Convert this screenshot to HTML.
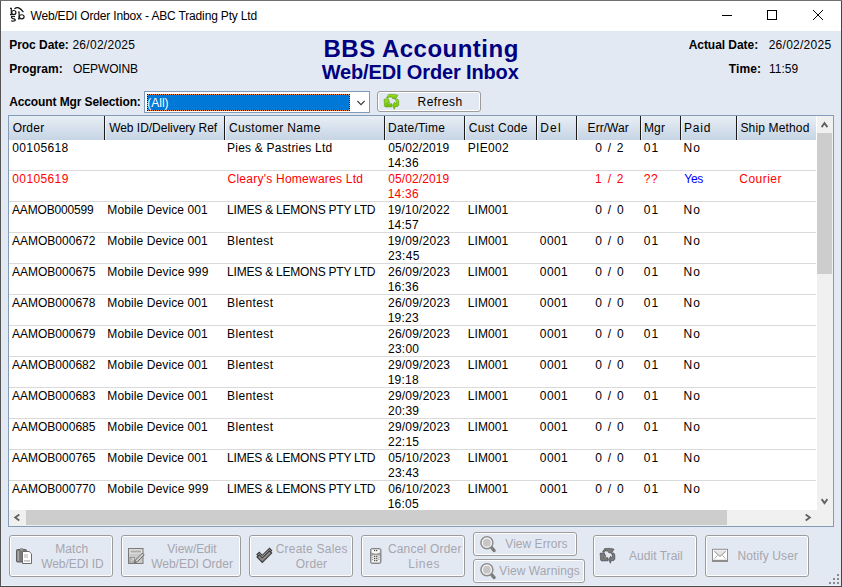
<!DOCTYPE html>
<html><head><meta charset="utf-8"><style>
html,body{margin:0;padding:0;width:842px;height:587px;overflow:hidden;background:#737373}
body{position:relative;font-family:'Liberation Sans',sans-serif;}
.t{position:absolute;white-space:nowrap;font-size:12px;line-height:12px;color:#000;font-family:'Liberation Sans',sans-serif;}
</style></head><body>
<div style="position:absolute;left:0px;top:0px;width:842px;height:587px;background:#555555"></div><div style="position:absolute;left:0px;top:0px;width:842px;height:1px;background:#707070"></div><div style="position:absolute;left:0px;top:586px;width:842px;height:1px;background:#4A4A4A"></div><div style="position:absolute;left:841px;top:1px;width:1px;height:585px;background:#404650"></div><div style="position:absolute;left:1px;top:1px;width:840px;height:30px;background:#FFFFFF"></div><div style="position:absolute;left:1px;top:31px;width:840px;height:555px;background:#E3E9F3"></div><div style="position:absolute;left:1px;top:585px;width:840px;height:1px;background:#EBF1FA"></div><svg style="position:absolute;left:0;top:0" width="842" height="31">
<g fill="#000" shape-rendering="crispEdges"><rect x="722" y="15" width="10" height="1"/><rect x="767" y="10" width="10" height="1"/><rect x="767" y="19" width="10" height="1"/><rect x="767" y="10" width="1" height="10"/><rect x="776" y="10" width="1" height="10"/><rect x="813" y="10" width="1" height="1"/><rect x="822" y="10" width="1" height="1"/><rect x="814" y="11" width="1" height="1"/><rect x="821" y="11" width="1" height="1"/><rect x="815" y="12" width="1" height="1"/><rect x="820" y="12" width="1" height="1"/><rect x="816" y="13" width="1" height="1"/><rect x="819" y="13" width="1" height="1"/><rect x="817" y="14" width="1" height="1"/><rect x="818" y="14" width="1" height="1"/><rect x="818" y="15" width="1" height="1"/><rect x="817" y="15" width="1" height="1"/><rect x="819" y="16" width="1" height="1"/><rect x="816" y="16" width="1" height="1"/><rect x="820" y="17" width="1" height="1"/><rect x="815" y="17" width="1" height="1"/><rect x="821" y="18" width="1" height="1"/><rect x="814" y="18" width="1" height="1"/><rect x="822" y="19" width="1" height="1"/><rect x="813" y="19" width="1" height="1"/></g>
<g fill="none" stroke="#111" stroke-width="1.15">
<path d="M10 8.4 H11.8 M11.3 8 V14.6 M10 14.6 H12"/>
<ellipse cx="13.8" cy="12.5" rx="2.1" ry="2.0"/>
<path d="M18 12 H19.6 M19.1 11.6 V18.8 M18 18.8 H19.6"/>
<ellipse cx="21.7" cy="16.8" rx="2.4" ry="2.0"/>
<path d="M14.4 8.9 Q18.5 5.2 23.4 12.2"/>
</g>
<g fill="none" stroke="#111" stroke-width="1.2">
<path d="M15 16.6 Q13 15.9 11.6 16.6 Q11 18.2 13.1 18.6 Q15.5 19 15.2 20.4 Q13.5 21.6 11 20.8"/>
</g>
</svg><div class="t" style="left:30.45px;top:10px;letter-spacing:-0.161px;">Web/EDI Order Inbox - ABC Trading Pty Ltd</div><div class="t" style="left:9.20px;top:39px;font-weight:bold;letter-spacing:-0.040px;">Proc Date:</div><div class="t" style="left:72.40px;top:39px;letter-spacing:0.283px;">26/02/2025</div><div class="t" style="left:9.20px;top:63px;font-weight:bold;letter-spacing:0.016px;">Program:</div><div class="t" style="left:72.93px;top:63px;letter-spacing:-0.115px;">OEPWOINB</div><div class="t" style="left:688.70px;top:39px;font-weight:bold;letter-spacing:-0.051px;">Actual Date:</div><div class="t" style="left:768.70px;top:39px;letter-spacing:0.261px;">26/02/2025</div><div class="t" style="left:728.87px;top:63px;font-weight:bold;letter-spacing:0.071px;">Time:</div><div class="t" style="left:769.09px;top:63px;letter-spacing:-0.037px;">11:59</div><div class="t" style="left:323.49px;top:37px;font-size:24px;line-height:24px;font-weight:bold;color:#000080;letter-spacing:0.491px;">BBS Accounting</div><div class="t" style="left:321.68px;top:62px;font-size:20px;line-height:20px;font-weight:bold;color:#000080;letter-spacing:-0.142px;">Web/EDI Order Inbox</div><div class="t" style="left:9.20px;top:96px;font-weight:bold;letter-spacing:-0.112px;">Account Mgr Selection:</div><div style="position:absolute;left:144px;top:91px;width:226px;height:22px;background:#FFFFFF;box-sizing:border-box;border:1px solid #7F9BB8"></div><div style="position:absolute;left:147px;top:94px;width:203px;height:17px;background:#0078D7;box-sizing:border-box;border:1px solid #FF8A28"></div><div style="position:absolute;left:147px;top:94px;width:203px;height:17px;box-sizing:border-box;border:1px dotted #101010"></div><div class="t" style="left:147.26px;top:97px;color:#FFFFFF;">(All)</div><svg style="position:absolute;left:355px;top:98px" width="12" height="10"><polyline points="2.4,3 6,6.6 9.6,3" fill="none" stroke="#3A3A3A" stroke-width="1.1"/></svg><div style="position:absolute;left:377px;top:91px;width:104px;height:21px;box-sizing:border-box;border:1px solid #9C9C9C;border-radius:3px;box-shadow:inset 0 0 0 1px #fff"></div><div class="t" style="left:417.62px;top:96px;letter-spacing:0.424px;">Refresh</div><svg style="position:absolute;left:0;top:0" width="842" height="120">
<defs><linearGradient id="gg" x1="0" y1="0" x2="0" y2="1"><stop offset="0" stop-color="#A8E020"/><stop offset="1" stop-color="#6CC000"/></linearGradient></defs>
<g fill="url(#gg)" stroke="#4F9A08" stroke-width="0.6" stroke-linejoin="round">
<polygon points="386.45,97.91 388.60,94.53 394.58,94.38 397.95,95.30 395.50,98.83 392.58,98.67 392.28,97.60 391.20,96.99 389.21,96.99 388.13,98.06"/>
<polygon points="383.99,99.29 388.13,98.83 389.67,102.51 388.13,102.20 387.21,103.74 391.82,103.74 391.97,106.80 385.37,106.96 384.45,105.88 384.30,102.20"/>
<polygon points="395.04,99.29 397.64,98.98 398.72,100.98 398.72,105.27 397.64,106.50 395.34,106.50 394.27,109.26 392.58,105.27 393.81,103.58 394.42,102.20 395.19,103.58 396.26,103.43 396.26,100.98"/>
</g></svg>
<div style="position:absolute;left:8px;top:115px;width:826px;height:412px;background:#FFFFFF;box-sizing:border-box;border:1px solid #839DB8"></div><div style="position:absolute;left:9px;top:116px;width:807px;height:24px;background:linear-gradient(#E8EEF5,#C6D4E4)"></div><div style="position:absolute;left:104px;top:116px;width:1px;height:24px;background:#1A1A1A"></div><div style="position:absolute;left:105px;top:116px;width:1px;height:24px;background:rgba(255,255,255,0.6)"></div><div style="position:absolute;left:224px;top:116px;width:1px;height:24px;background:#1A1A1A"></div><div style="position:absolute;left:225px;top:116px;width:1px;height:24px;background:rgba(255,255,255,0.6)"></div><div style="position:absolute;left:384px;top:116px;width:1px;height:24px;background:#1A1A1A"></div><div style="position:absolute;left:385px;top:116px;width:1px;height:24px;background:rgba(255,255,255,0.6)"></div><div style="position:absolute;left:464px;top:116px;width:1px;height:24px;background:#1A1A1A"></div><div style="position:absolute;left:465px;top:116px;width:1px;height:24px;background:rgba(255,255,255,0.6)"></div><div style="position:absolute;left:536px;top:116px;width:1px;height:24px;background:#1A1A1A"></div><div style="position:absolute;left:537px;top:116px;width:1px;height:24px;background:rgba(255,255,255,0.6)"></div><div style="position:absolute;left:576px;top:116px;width:1px;height:24px;background:#1A1A1A"></div><div style="position:absolute;left:577px;top:116px;width:1px;height:24px;background:rgba(255,255,255,0.6)"></div><div style="position:absolute;left:640px;top:116px;width:1px;height:24px;background:#1A1A1A"></div><div style="position:absolute;left:641px;top:116px;width:1px;height:24px;background:rgba(255,255,255,0.6)"></div><div style="position:absolute;left:680px;top:116px;width:1px;height:24px;background:#1A1A1A"></div><div style="position:absolute;left:681px;top:116px;width:1px;height:24px;background:rgba(255,255,255,0.6)"></div><div style="position:absolute;left:736px;top:116px;width:1px;height:24px;background:#1A1A1A"></div><div style="position:absolute;left:737px;top:116px;width:1px;height:24px;background:rgba(255,255,255,0.6)"></div><div class="t" style="left:12.63px;top:122px;letter-spacing:0.207px;">Order</div><div class="t" style="left:109.15px;top:122px;letter-spacing:-0.025px;">Web ID/Delivery Ref</div><div class="t" style="left:228.89px;top:122px;letter-spacing:0.340px;">Customer Name</div><div class="t" style="left:388.12px;top:122px;letter-spacing:0.234px;">Date/Time</div><div class="t" style="left:468.79px;top:122px;letter-spacing:0.243px;">Cust Code</div><div class="t" style="left:540.22px;top:122px;letter-spacing:1.191px;">Del</div><div class="t" style="left:587.62px;top:122px;letter-spacing:0.043px;">Err/War</div><div class="t" style="left:644.02px;top:122px;letter-spacing:0.109px;">Mgr</div><div class="t" style="left:683.92px;top:122px;letter-spacing:0.847px;">Paid</div><div class="t" style="left:740.46px;top:122px;letter-spacing:0.154px;">Ship Method</div><div style="position:absolute;left:0;top:140px;width:816px;height:370px;overflow:hidden"><div class="t" style="left:12.33px;top:2px;letter-spacing:0.343px;">00105618</div><div class="t" style="left:227.12px;top:2px;letter-spacing:0.204px;">Pies &amp; Pastries Ltd</div><div class="t" style="left:388.13px;top:2px;letter-spacing:0.120px;">05/02/2019</div><div class="t" style="left:387.69px;top:17px;letter-spacing:0.243px;">14:36</div><div class="t" style="left:467.82px;top:2px;letter-spacing:0.285px;">PIE002</div><div class="t" style="left:595.33px;top:2px;">0</div><div class="t" style="left:607.70px;top:2px;">/</div><div class="t" style="left:616.80px;top:2px;">2</div><div class="t" style="left:643.73px;top:2px;letter-spacing:1.107px;">01</div><div class="t" style="left:683.62px;top:2px;letter-spacing:0.948px;">No</div><div style="position:absolute;left:9px;top:30px;width:807px;height:1px;background:#DADADA"></div><div class="t" style="left:12.33px;top:33px;color:#FF0000;letter-spacing:0.373px;">00105619</div><div class="t" style="left:227.49px;top:33px;color:#FF0000;letter-spacing:0.245px;">Cleary&#x27;s Homewares Ltd</div><div class="t" style="left:388.13px;top:33px;color:#FF0000;letter-spacing:0.120px;">05/02/2019</div><div class="t" style="left:387.69px;top:48px;color:#FF0000;letter-spacing:0.243px;">14:36</div><div class="t" style="left:594.89px;top:33px;color:#FF0000;">1</div><div class="t" style="left:607.70px;top:33px;color:#FF0000;">/</div><div class="t" style="left:616.80px;top:33px;color:#FF0000;">2</div><div class="t" style="left:643.71px;top:33px;color:#FF0000;letter-spacing:0.652px;">??</div><div class="t" style="left:684.34px;top:33px;color:#0000FF;letter-spacing:-0.340px;">Yes</div><div class="t" style="left:739.29px;top:33px;color:#FF0000;letter-spacing:0.460px;">Courier</div><div style="position:absolute;left:9px;top:61px;width:807px;height:1px;background:#DADADA"></div><div class="t" style="left:11.98px;top:64px;letter-spacing:-0.169px;">AAMOB000599</div><div class="t" style="left:107.32px;top:64px;letter-spacing:0.109px;">Mobile Device 001</div><div class="t" style="left:227.12px;top:64px;letter-spacing:-0.218px;">LIMES &amp; LEMONS PTY LTD</div><div class="t" style="left:387.69px;top:64px;letter-spacing:0.216px;">19/10/2022</div><div class="t" style="left:387.69px;top:79px;letter-spacing:0.243px;">14:57</div><div class="t" style="left:467.82px;top:64px;letter-spacing:0.089px;">LIM001</div><div class="t" style="left:595.33px;top:64px;">0</div><div class="t" style="left:607.70px;top:64px;">/</div><div class="t" style="left:616.93px;top:64px;">0</div><div class="t" style="left:643.73px;top:64px;letter-spacing:1.107px;">01</div><div class="t" style="left:683.62px;top:64px;letter-spacing:0.948px;">No</div><div style="position:absolute;left:9px;top:92px;width:807px;height:1px;background:#DADADA"></div><div class="t" style="left:11.98px;top:95px;letter-spacing:0.012px;">AAMOB000672</div><div class="t" style="left:107.32px;top:95px;letter-spacing:0.109px;">Mobile Device 001</div><div class="t" style="left:227.12px;top:95px;letter-spacing:0.373px;">Blentest</div><div class="t" style="left:387.69px;top:95px;letter-spacing:0.254px;">19/09/2023</div><div class="t" style="left:388.00px;top:110px;letter-spacing:0.345px;">23:45</div><div class="t" style="left:467.82px;top:95px;letter-spacing:0.089px;">LIM001</div><div class="t" style="left:539.83px;top:95px;letter-spacing:0.386px;">0001</div><div class="t" style="left:595.33px;top:95px;">0</div><div class="t" style="left:607.70px;top:95px;">/</div><div class="t" style="left:616.93px;top:95px;">0</div><div class="t" style="left:643.73px;top:95px;letter-spacing:1.107px;">01</div><div class="t" style="left:683.62px;top:95px;letter-spacing:0.948px;">No</div><div style="position:absolute;left:9px;top:123px;width:807px;height:1px;background:#DADADA"></div><div class="t" style="left:11.98px;top:126px;letter-spacing:0.012px;">AAMOB000675</div><div class="t" style="left:107.32px;top:126px;letter-spacing:0.143px;">Mobile Device 999</div><div class="t" style="left:227.12px;top:126px;letter-spacing:-0.218px;">LIMES &amp; LEMONS PTY LTD</div><div class="t" style="left:388.00px;top:126px;letter-spacing:0.216px;">26/09/2023</div><div class="t" style="left:387.69px;top:141px;letter-spacing:0.243px;">16:36</div><div class="t" style="left:467.82px;top:126px;letter-spacing:0.089px;">LIM001</div><div class="t" style="left:539.83px;top:126px;letter-spacing:0.386px;">0001</div><div class="t" style="left:595.33px;top:126px;">0</div><div class="t" style="left:607.70px;top:126px;">/</div><div class="t" style="left:616.93px;top:126px;">0</div><div class="t" style="left:643.73px;top:126px;letter-spacing:1.107px;">01</div><div class="t" style="left:683.62px;top:126px;letter-spacing:0.948px;">No</div><div style="position:absolute;left:9px;top:154px;width:807px;height:1px;background:#DADADA"></div><div class="t" style="left:11.98px;top:157px;letter-spacing:0.012px;">AAMOB000678</div><div class="t" style="left:107.32px;top:157px;letter-spacing:0.109px;">Mobile Device 001</div><div class="t" style="left:227.12px;top:157px;letter-spacing:0.373px;">Blentest</div><div class="t" style="left:388.00px;top:157px;letter-spacing:0.216px;">26/09/2023</div><div class="t" style="left:387.69px;top:172px;letter-spacing:0.243px;">19:23</div><div class="t" style="left:467.82px;top:157px;letter-spacing:0.089px;">LIM001</div><div class="t" style="left:539.83px;top:157px;letter-spacing:0.386px;">0001</div><div class="t" style="left:595.33px;top:157px;">0</div><div class="t" style="left:607.70px;top:157px;">/</div><div class="t" style="left:616.93px;top:157px;">0</div><div class="t" style="left:643.73px;top:157px;letter-spacing:1.107px;">01</div><div class="t" style="left:683.62px;top:157px;letter-spacing:0.948px;">No</div><div style="position:absolute;left:9px;top:185px;width:807px;height:1px;background:#DADADA"></div><div class="t" style="left:11.98px;top:188px;letter-spacing:0.012px;">AAMOB000679</div><div class="t" style="left:107.32px;top:188px;letter-spacing:0.109px;">Mobile Device 001</div><div class="t" style="left:227.12px;top:188px;letter-spacing:0.373px;">Blentest</div><div class="t" style="left:388.00px;top:188px;letter-spacing:0.216px;">26/09/2023</div><div class="t" style="left:388.00px;top:203px;letter-spacing:0.243px;">23:00</div><div class="t" style="left:467.82px;top:188px;letter-spacing:0.089px;">LIM001</div><div class="t" style="left:539.83px;top:188px;letter-spacing:0.386px;">0001</div><div class="t" style="left:595.33px;top:188px;">0</div><div class="t" style="left:607.70px;top:188px;">/</div><div class="t" style="left:616.93px;top:188px;">0</div><div class="t" style="left:643.73px;top:188px;letter-spacing:1.107px;">01</div><div class="t" style="left:683.62px;top:188px;letter-spacing:0.948px;">No</div><div style="position:absolute;left:9px;top:216px;width:807px;height:1px;background:#DADADA"></div><div class="t" style="left:11.98px;top:219px;letter-spacing:0.012px;">AAMOB000682</div><div class="t" style="left:107.32px;top:219px;letter-spacing:0.109px;">Mobile Device 001</div><div class="t" style="left:227.12px;top:219px;letter-spacing:0.373px;">Blentest</div><div class="t" style="left:388.00px;top:219px;letter-spacing:0.216px;">29/09/2023</div><div class="t" style="left:387.69px;top:234px;letter-spacing:0.243px;">19:18</div><div class="t" style="left:467.82px;top:219px;letter-spacing:0.089px;">LIM001</div><div class="t" style="left:539.83px;top:219px;letter-spacing:0.386px;">0001</div><div class="t" style="left:595.33px;top:219px;">0</div><div class="t" style="left:607.70px;top:219px;">/</div><div class="t" style="left:616.93px;top:219px;">0</div><div class="t" style="left:643.73px;top:219px;letter-spacing:1.107px;">01</div><div class="t" style="left:683.62px;top:219px;letter-spacing:0.948px;">No</div><div style="position:absolute;left:9px;top:247px;width:807px;height:1px;background:#DADADA"></div><div class="t" style="left:11.98px;top:250px;letter-spacing:0.012px;">AAMOB000683</div><div class="t" style="left:107.32px;top:250px;letter-spacing:0.109px;">Mobile Device 001</div><div class="t" style="left:227.12px;top:250px;letter-spacing:0.373px;">Blentest</div><div class="t" style="left:388.00px;top:250px;letter-spacing:0.216px;">29/09/2023</div><div class="t" style="left:388.00px;top:265px;letter-spacing:0.243px;">20:39</div><div class="t" style="left:467.82px;top:250px;letter-spacing:0.089px;">LIM001</div><div class="t" style="left:539.83px;top:250px;letter-spacing:0.386px;">0001</div><div class="t" style="left:595.33px;top:250px;">0</div><div class="t" style="left:607.70px;top:250px;">/</div><div class="t" style="left:616.93px;top:250px;">0</div><div class="t" style="left:643.73px;top:250px;letter-spacing:1.107px;">01</div><div class="t" style="left:683.62px;top:250px;letter-spacing:0.948px;">No</div><div style="position:absolute;left:9px;top:278px;width:807px;height:1px;background:#DADADA"></div><div class="t" style="left:11.98px;top:281px;letter-spacing:0.012px;">AAMOB000685</div><div class="t" style="left:107.32px;top:281px;letter-spacing:0.109px;">Mobile Device 001</div><div class="t" style="left:227.12px;top:281px;letter-spacing:0.373px;">Blentest</div><div class="t" style="left:388.00px;top:281px;letter-spacing:0.216px;">29/09/2023</div><div class="t" style="left:388.00px;top:296px;letter-spacing:0.243px;">22:15</div><div class="t" style="left:467.82px;top:281px;letter-spacing:0.089px;">LIM001</div><div class="t" style="left:539.83px;top:281px;letter-spacing:0.386px;">0001</div><div class="t" style="left:595.33px;top:281px;">0</div><div class="t" style="left:607.70px;top:281px;">/</div><div class="t" style="left:616.93px;top:281px;">0</div><div class="t" style="left:643.73px;top:281px;letter-spacing:1.107px;">01</div><div class="t" style="left:683.62px;top:281px;letter-spacing:0.948px;">No</div><div style="position:absolute;left:9px;top:309px;width:807px;height:1px;background:#DADADA"></div><div class="t" style="left:11.98px;top:312px;letter-spacing:0.012px;">AAMOB000765</div><div class="t" style="left:107.32px;top:312px;letter-spacing:0.109px;">Mobile Device 001</div><div class="t" style="left:227.12px;top:312px;letter-spacing:-0.218px;">LIMES &amp; LEMONS PTY LTD</div><div class="t" style="left:388.13px;top:312px;letter-spacing:0.216px;">05/10/2023</div><div class="t" style="left:388.00px;top:327px;letter-spacing:0.243px;">23:43</div><div class="t" style="left:467.82px;top:312px;letter-spacing:0.089px;">LIM001</div><div class="t" style="left:539.83px;top:312px;letter-spacing:0.386px;">0001</div><div class="t" style="left:595.33px;top:312px;">0</div><div class="t" style="left:607.70px;top:312px;">/</div><div class="t" style="left:616.93px;top:312px;">0</div><div class="t" style="left:643.73px;top:312px;letter-spacing:1.107px;">01</div><div class="t" style="left:683.62px;top:312px;letter-spacing:0.948px;">No</div><div style="position:absolute;left:9px;top:340px;width:807px;height:1px;background:#DADADA"></div><div class="t" style="left:11.98px;top:343px;letter-spacing:0.012px;">AAMOB000770</div><div class="t" style="left:107.32px;top:343px;letter-spacing:0.143px;">Mobile Device 999</div><div class="t" style="left:227.12px;top:343px;letter-spacing:-0.218px;">LIMES &amp; LEMONS PTY LTD</div><div class="t" style="left:388.13px;top:343px;letter-spacing:0.216px;">06/10/2023</div><div class="t" style="left:387.69px;top:358px;letter-spacing:0.243px;">16:05</div><div class="t" style="left:467.82px;top:343px;letter-spacing:0.089px;">LIM001</div><div class="t" style="left:539.83px;top:343px;letter-spacing:0.386px;">0001</div><div class="t" style="left:595.33px;top:343px;">0</div><div class="t" style="left:607.70px;top:343px;">/</div><div class="t" style="left:616.93px;top:343px;">0</div><div class="t" style="left:643.73px;top:343px;letter-spacing:1.107px;">01</div><div class="t" style="left:683.62px;top:343px;letter-spacing:0.948px;">No</div><div style="position:absolute;left:9px;top:371px;width:807px;height:1px;background:#DADADA"></div></div><div style="position:absolute;left:817px;top:116px;width:16px;height:394px;background:#F0F0F0"></div><div style="position:absolute;left:817px;top:133px;width:15px;height:141px;background:#CDCDCD"></div><svg style="position:absolute;left:816px;top:116px" width="17" height="394"><polyline points="5.6,11.1 8.5,7.1 11.4,11.1" fill="none" stroke="#606060" stroke-width="1.8"/><polyline points="5.6,383.1 8.5,387.1 11.4,383.1" fill="none" stroke="#606060" stroke-width="1.8"/></svg><div style="position:absolute;left:9px;top:510px;width:824px;height:16px;background:#F0F0F0"></div><div style="position:absolute;left:26px;top:510px;width:701px;height:15px;background:#CDCDCD"></div><svg style="position:absolute;left:9px;top:510px" width="808" height="16"><polyline points="10.3,4.6 6.2,7.5 10.3,10.4" fill="none" stroke="#606060" stroke-width="1.8"/><polyline points="796.7,4.6 800.8,7.5 796.7,10.4" fill="none" stroke="#606060" stroke-width="1.8"/></svg><div style="position:absolute;left:9px;top:535px;width:104px;height:42px;box-sizing:border-box;border:1px solid #9C9C9C;border-radius:3px;box-shadow:inset 0 0 0 1px #fff"></div><div class="t" style="left:55.32px;top:543px;color:#A6A6AE;letter-spacing:0.046px;">Match</div><div class="t" style="left:41.25px;top:558px;color:#A6A6AE;letter-spacing:-0.080px;">Web/EDI ID</div><div style="position:absolute;left:121px;top:535px;width:120px;height:42px;box-sizing:border-box;border:1px solid #9C9C9C;border-radius:3px;box-shadow:inset 0 0 0 1px #fff"></div><div class="t" style="left:167.35px;top:543px;color:#A6A6AE;letter-spacing:-0.060px;">View/Edit</div><div class="t" style="left:151.15px;top:558px;color:#A6A6AE;">Web/EDI Order</div><div style="position:absolute;left:249px;top:535px;width:104px;height:42px;box-sizing:border-box;border:1px solid #9C9C9C;border-radius:3px;box-shadow:inset 0 0 0 1px #fff"></div><div class="t" style="left:275.69px;top:543px;color:#A6A6AE;letter-spacing:0.216px;">Create Sales</div><div class="t" style="left:295.73px;top:558px;color:#A6A6AE;letter-spacing:0.173px;">Order</div><div style="position:absolute;left:361px;top:535px;width:104px;height:42px;box-sizing:border-box;border:1px solid #9C9C9C;border-radius:3px;box-shadow:inset 0 0 0 1px #fff"></div><div class="t" style="left:387.89px;top:543px;color:#A6A6AE;letter-spacing:0.195px;">Cancel Order</div><div class="t" style="left:408.22px;top:558px;color:#A6A6AE;letter-spacing:0.658px;">Lines</div><div style="position:absolute;left:473px;top:532px;width:104px;height:24px;box-sizing:border-box;border:1px solid #9C9C9C;border-radius:3px;box-shadow:inset 0 0 0 1px #fff"></div><div class="t" style="left:505.35px;top:538px;color:#A6A6AE;letter-spacing:0.028px;">View Errors</div><div style="position:absolute;left:473px;top:559px;width:112px;height:24px;box-sizing:border-box;border:1px solid #9C9C9C;border-radius:3px;box-shadow:inset 0 0 0 1px #fff"></div><div class="t" style="left:499.25px;top:565px;color:#A6A6AE;letter-spacing:0.097px;">View Warnings</div><div style="position:absolute;left:593px;top:535px;width:104px;height:42px;box-sizing:border-box;border:1px solid #9C9C9C;border-radius:3px;box-shadow:inset 0 0 0 1px #fff"></div><div class="t" style="left:628.98px;top:550px;color:#A6A6AE;letter-spacing:0.041px;">Audit Trail</div><div style="position:absolute;left:705px;top:535px;width:104px;height:42px;box-sizing:border-box;border:1px solid #9C9C9C;border-radius:3px;box-shadow:inset 0 0 0 1px #fff"></div><div class="t" style="left:737.42px;top:550px;color:#A6A6AE;letter-spacing:0.124px;">Notify User</div><svg style="position:absolute;left:0;top:0" width="842" height="587">
<!-- clipboard + doc -->
<rect x="16.5" y="549.5" width="10" height="12.5" rx="1" fill="#7A7A7A" stroke="#5E5E5E"/>
<rect x="17.6" y="551" width="1.2" height="10" fill="#B8B8B8"/>
<rect x="20" y="548" width="3.2" height="2.4" fill="#9A9A9A"/>
<path d="M22.5 551.5 H29.2 L31.5 553.8 V563.5 H22.5 Z" fill="#FFFFFF" stroke="#6A6A6A"/>
<rect x="24" y="554" width="4" height="4" fill="#D8D8D8"/>
<rect x="24" y="560" width="6" height="1.8" fill="#C8C8C8"/>
<!-- form + pencil -->
<rect x="128.5" y="548.5" width="14.5" height="15" fill="#C9C9C9" stroke="#7A7A7A"/>
<rect x="130" y="550" width="11.5" height="3" fill="#ABABAB" stroke="#F2F2F2" stroke-width="0.8"/>
<rect x="130" y="557.5" width="4.5" height="4.5" fill="#D8D8D8" stroke="#8A8A8A" stroke-width="0.8"/><path d="M130.5 558 L134 561.5" stroke="#8A8A8A" stroke-width="0.8"/>
<path d="M134.6 562.8 L135.5 560.0 L142.4 553.1 L144.2 554.9 L137.3 561.8 Z" fill="#D0D0D0" stroke="#505050" stroke-width="0.8"/>
<!-- checkmark -->
<path d="M257 554.5 L259.3 552.3 L262.3 555.3 L269.5 548.3 L271.7 550.6 L262.3 560 Z" fill="#AFAFAF" stroke="#3A3A3A" stroke-width="1.1"/>
<path d="M257 557 L259.3 554.8 L262.3 557.8 L269.5 550.8 L271.7 553.1 L262.3 562.5 Z" fill="#8A8A8A" stroke="#3A3A3A" stroke-width="1.1"/>
<!-- calculator -->
<rect x="370.5" y="548.5" width="10.5" height="15" rx="1.8" fill="#A0A0A0" stroke="#858585"/>
<path d="M371.6 549.6 H379.9 V552.6 Q375.75 554.6 371.6 552.6 Z" fill="#FAFAFA"/>
<path d="M371.6 556 Q375.75 553.8 379.9 556 V562.4 H371.6 Z" fill="#F0F0F0"/>
<g fill="#505050">
<rect x="374" y="550" width="1.2" height="1.2"/><rect x="376" y="550" width="1.2" height="1.2"/>
<rect x="374" y="555.7" width="1.3" height="1.3"/><rect x="376.1" y="555.7" width="1.3" height="1.3"/>
<rect x="374" y="557.8" width="1.3" height="1.3"/><rect x="376.1" y="557.8" width="1.3" height="1.3"/>
<rect x="374" y="559.9" width="1.3" height="1.3"/><rect x="376.1" y="559.9" width="1.3" height="1.3"/>
</g>
<g fill="#8A8A8A">
<rect x="372.2" y="556.8" width="1" height="1"/><rect x="378.3" y="556.8" width="1" height="1"/>
<rect x="372.2" y="558.9" width="1" height="1"/><rect x="378.3" y="558.9" width="1" height="1"/>
</g>
<!-- magnifiers -->
<g id="mag">
<path d="M491.3 547.3 L494.2 550.6" stroke="#7C7C7C" stroke-width="3.2" stroke-linecap="round"/>
<circle cx="486.9" cy="542.7" r="6.0" fill="#C6C6C6" stroke="#8C8C8C" stroke-width="1.5"/>
<circle cx="486.9" cy="542.7" r="4.5" fill="none" stroke="#F6F6F6" stroke-width="1.2"/>
</g>
<use href="#mag" x="0" y="27"/>
<!-- gray recycle -->
<g fill="#7A7A7A" stroke="#3C3C3C" stroke-width="0.6" stroke-linejoin="round">
<polygon points="602.55,551.91 604.70,548.53 610.68,548.38 614.05,549.30 611.60,552.83 608.68,552.67 608.38,551.60 607.30,550.99 605.31,550.99 604.23,552.06"/>
<polygon points="600.09,553.29 604.23,552.83 605.77,556.51 604.23,556.20 603.31,557.74 607.92,557.74 608.07,560.80 601.47,560.96 600.55,559.88 600.40,556.20"/>
<polygon points="611.14,553.29 613.74,552.98 614.82,554.98 614.82,559.27 613.74,560.50 611.44,560.50 610.37,563.26 608.68,559.27 609.91,557.58 610.52,556.20 611.29,557.58 612.36,557.43 612.36,554.98"/>
</g>
<!-- envelope -->
<rect x="712.5" y="549.3" width="15" height="12.2" fill="#FFFFFF" stroke="#8E8E8E"/>
<rect x="712" y="559.8" width="16" height="2.2" fill="#8E8E8E"/>
<path d="M714 550.5 H726 V552 L720 557 L714 552 Z" fill="#E6E6E6"/><path d="M714.3 551.2 L720 556.4 L725.7 551.2" fill="none" stroke="#969696" stroke-width="1"/>
<path d="M714.5 558.5 L717.5 555.5 M725.5 558.5 L722.5 555.5" stroke="#9A9A9A" stroke-width="0.9"/>
<!-- grip -->
<g fill="#8A8A8A">
<rect x="837" y="574" width="2" height="2"/>
<rect x="833" y="578" width="2" height="2"/><rect x="837" y="578" width="2" height="2"/>
<rect x="829" y="582" width="2" height="2"/><rect x="833" y="582" width="2" height="2"/><rect x="837" y="582" width="2" height="2"/>
</g>
</svg>

</body></html>
